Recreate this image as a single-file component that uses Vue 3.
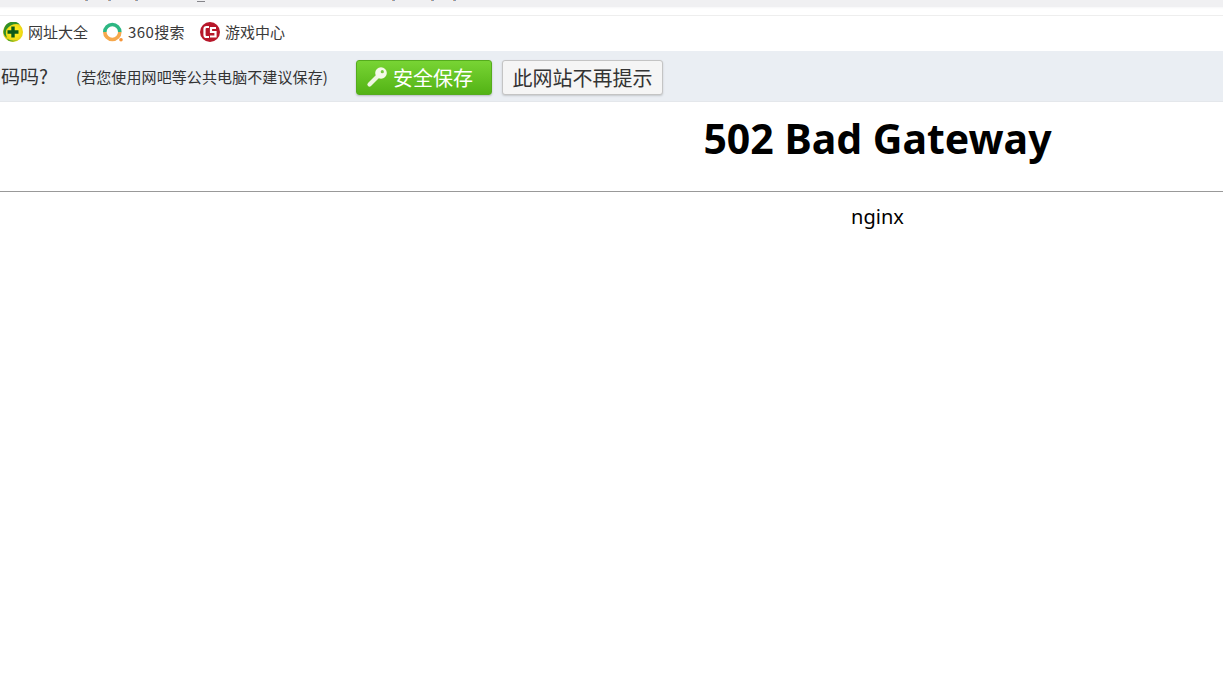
<template>
  <div class="page">
    <div class="tabstrip">
      <div class="clipped-title">
        <span class="tick t1"></span>
        <span class="tick t2"></span>
        <span class="tick t3"></span>
        <span class="under"></span>
        <span class="tick t4"></span>
        <span class="tick t5"></span>
        <span class="tick t6"></span>
      </div>
    </div>

    <div class="bookmarks">
      <a class="bookmark">
        <svg width="20" height="20" viewBox="0 0 20 20">
          <defs>
            <radialGradient id="hao" cx="0.55" cy="0.5" r="0.6">
              <stop offset="0.4" stop-color="#fbe91c" />
              <stop offset="1" stop-color="#dcc30c" />
            </radialGradient>
          </defs>
          <circle cx="10" cy="10" r="10" fill="url(#hao)" />
          <path d="M1 7a9.500 9.500 0 0 1 16-4.500Q9 0.500 3.500 7.500Q2 11 4 16Q-1 12 1 7z" fill="#2f8f2a" />
          <path d="M4 16.500Q9 20 15 18Q10 20.500 5 18.500z" fill="#45a62d" />
          <path d="M8.300 4.500h3.400v3.800h3.800v3.400h-3.800v3.800H8.300v-3.800H4.500V8.300h3.800z" fill="#0c5a18" />
        </svg>
        <span>网址大全</span>
      </a>
      <a class="bookmark wide">
        <svg width="20" height="20" viewBox="0 0 20 20" fill="none">
          <path d="M1.800 10a7.500 7.500 0 0 1 15 0" stroke="#2db783" stroke-width="3.600" />
          <path d="M1.800 10a7.500 7.500 0 0 0 15 0" stroke="#f6a84c" stroke-width="3.600" />
          <circle cx="18" cy="17.800" r="1.800" fill="#f6953a" />
        </svg>
        <span>360搜索</span>
      </a>
      <a class="bookmark">
        <svg width="20" height="20" viewBox="0 0 20 20">
          <circle cx="10" cy="10" r="10" fill="#b7172a" />
          <path d="M9 5H6.500a2 2 0 0 0-2 2v6a2 2 0 0 0 2 2H9" fill="none" stroke="#fff" stroke-width="2.200" />
          <path d="M16 6H11v4h4.500v4.500H10" fill="none" stroke="#fff" stroke-width="2.200" />
        </svg>
        <span>游戏中心</span>
      </a>
    </div>

    <div class="savebar">
      <span class="question">码吗?</span>
      <span class="hint">(若您使用网吧等公共电脑不建议保存)</span>
      <button class="btn btn-save">
        <svg width="22" height="22" viewBox="0 0 22 22">
          <path d="M3.500 18.500 11 11" stroke="#eef5e0" stroke-width="4.200" stroke-linecap="round" />
          <circle cx="15" cy="7" r="5.800" fill="#f5f9ea" />
          <circle cx="16.300" cy="5.700" r="1.600" fill="#77c83f" />
        </svg>
        <span>安全保存</span>
      </button>
      <button class="btn btn-never">此网站不再提示</button>
    </div>

    <div class="content">
      <h1>502 Bad Gateway</h1>
      <hr />
      <p>nginx</p>
    </div>
  </div>
</template>

<script setup>
</script>

<style>
html,
body {
  margin: 0;
  overflow: hidden;
  background: #fff;
}
</style>

<style scoped>
.page {
  width: 1223px;
  height: 674px;
  overflow: hidden;
  font-family: "Noto Sans CJK SC", "Noto Sans", sans-serif;
}

.tabstrip {
  height: 15px;
  border-bottom: 1px solid #eeeeee;
  background: linear-gradient(#f0f0f2 0, #f0f0f2 7px, #f7f7f8 7px, #fff 9px);
}

.clipped-title {
  display: flex;
  align-items: flex-start;
  height: 2px;
  padding-left: 85px;
}

.tick {
  width: 3px;
  height: 1px;
  background: linear-gradient(90deg, #d9a273 33%, #8b8f9a 33%, #7ea6d8);
}

.t2 { margin-left: 20px; }
.t3 { margin-left: 24px; }
.t4 { margin-left: 187px; }
.t5 { margin-left: 36px; }
.t6 { margin-left: 19px; }

.under {
  width: 8px;
  height: 1px;
  margin-top: 1px;
  margin-left: 59px;
  background: #85858a;
}

.bookmarks {
  display: flex;
  align-items: center;
  gap: 15px;
  height: 35px;
  padding: 0 0 3px 3px;
  box-sizing: border-box;
  font-size: 15px;
  color: #3a3a3a;
}

.bookmark {
  display: flex;
  align-items: center;
  gap: 5px;
}

.bookmark span {
  line-height: 20px;
}

.wide span {
  letter-spacing: 0.4px;
}

.savebar {
  display: flex;
  align-items: center;
  height: 50px;
  border-bottom: 1px solid #e4e7eb;
  background: #eaeef3;
  color: #333;
}

.question {
  width: 75px;
  margin-left: 1px;
  margin-bottom: 2px;
  font-size: 19px;
}

.hint {
  width: 280px;
  font-size: 15px;
  letter-spacing: 0.1px;
}

.btn {
  display: flex;
  align-items: center;
  height: 35px;
  margin-top: 2px;
  padding: 0;
  border-radius: 3px;
  font-family: inherit;
  font-size: 20px;
}

.btn-save {
  width: 136px;
  gap: 5px;
  padding-left: 9px;
  border: 1px solid #55ac1d;
  background: linear-gradient(#78d434, #53b315);
  color: #fff;
  box-shadow: 0 1px 2px #b8bcc2;
}

.btn-never {
  justify-content: center;
  width: 161px;
  margin-left: 10px;
  border: 1px solid #c4c4c4;
  background: #f5f5f5;
  color: #333;
  box-shadow: 0 1px 2px #c4c8cc;
}

.content {
  width: 1755px;
  text-align: center;
  color: #000;
}

h1 {
  margin: 0;
  padding: 9px 0 26px;
  font-family: "Noto Sans", sans-serif;
  font-size: 41px;
  font-weight: 700;
  line-height: 54px;
}

hr {
  height: 1px;
  margin: 0;
  border: 0;
  background: #999;
}

p {
  margin: 11px 0 0;
  font-family: "Noto Sans", sans-serif;
  font-size: 20px;
  line-height: 27px;
}
</style>
